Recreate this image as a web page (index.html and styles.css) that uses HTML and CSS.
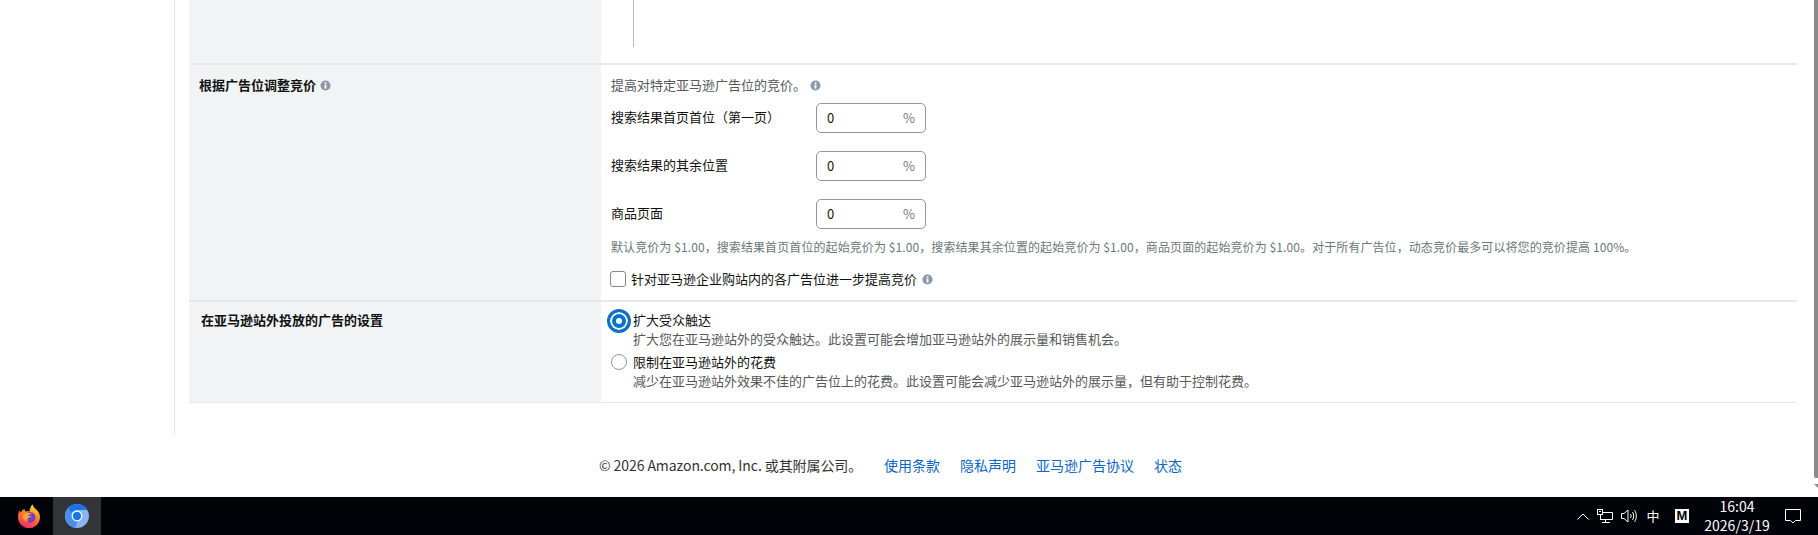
FILE: index.html
```html
<!DOCTYPE html>
<html lang="zh-CN">
<head>
<meta charset="utf-8">
<title>广告设置</title>
<link rel="stylesheet" href="styles.css">
</head>
<body>
<div class="viewport">
  <div class="page">
    <div class="shell">
      <aside class="sidebar"></aside>
      <main class="content">
        <section class="row row-top">
          <div class="row-label"></div>
          <div class="row-body"><div class="stem"></div></div>
        </section>
        <section class="row row-bids">
          <div class="row-label">
            <span class="label-strong">根据广告位调整竞价</span>
            <svg class="info" viewBox="0 0 12 12"><circle cx="6" cy="6" r="5.5" fill="#8c97a8"/><rect x="5" y="5" width="2" height="4.4" fill="#fff"/><rect x="5" y="2.6" width="2" height="1.6" fill="#fff"/></svg>
          </div>
          <div class="row-body bids-body">
            <div class="intro"><span>提高对特定亚马逊广告位的竞价。</span>
              <svg class="info" viewBox="0 0 12 12"><circle cx="6" cy="6" r="5.5" fill="#8c97a8"/><rect x="5" y="5" width="2" height="4.4" fill="#fff"/><rect x="5" y="2.6" width="2" height="1.6" fill="#fff"/></svg>
            </div>
            <div class="bid">
              <span class="bid-name">搜索结果首页首位（第一页）</span>
              <div class="bid-input"><span class="bid-value">0</span><span class="bid-unit">%</span></div>
            </div>
            <div class="bid">
              <span class="bid-name">搜索结果的其余位置</span>
              <div class="bid-input"><span class="bid-value">0</span><span class="bid-unit">%</span></div>
            </div>
            <div class="bid">
              <span class="bid-name">商品页面</span>
              <div class="bid-input"><span class="bid-value">0</span><span class="bid-unit">%</span></div>
            </div>
            <p class="hint">默认竞价为 $1.00，搜索结果首页首位的起始竞价为 $1.00，搜索结果其余位置的起始竞价为 $1.00，商品页面的起始竞价为 $1.00。对于所有广告位，动态竞价最多可以将您的竞价提高 100%。</p>
            <div class="check-line">
              <span class="checkbox"></span>
              <span>针对亚马逊企业购站内的各广告位进一步提高竞价</span>
              <svg class="info" viewBox="0 0 12 12"><circle cx="6" cy="6" r="5.5" fill="#8c97a8"/><rect x="5" y="5" width="2" height="4.4" fill="#fff"/><rect x="5" y="2.6" width="2" height="1.6" fill="#fff"/></svg>
            </div>
          </div>
        </section>
        <section class="row row-offsite">
          <div class="row-label"><span class="label-strong">在亚马逊站外投放的广告的设置</span></div>
          <div class="row-body offsite-body">
            <div class="option option-first">
              <span class="radio-slot"><span class="radio radio-on"></span></span>
              <div class="option-text">
                <div class="option-title">扩大受众触达</div>
                <div class="option-desc">扩大您在亚马逊站外的受众触达。此设置可能会增加亚马逊站外的展示量和销售机会。</div>
              </div>
            </div>
            <div class="option">
              <span class="radio-slot"><span class="radio"></span></span>
              <div class="option-text">
                <div class="option-title">限制在亚马逊站外的花费</div>
                <div class="option-desc">减少在亚马逊站外效果不佳的广告位上的花费。此设置可能会减少亚马逊站外的展示量，但有助于控制花费。</div>
              </div>
            </div>
          </div>
        </section>
      </main>
    </div>
    <footer class="footer">
      <span class="copyright">© 2026 Amazon.com, Inc. 或其附属公司。</span>
      <nav class="footer-links">
        <a href="#">使用条款</a>
        <a href="#">隐私声明</a>
        <a href="#">亚马逊广告协议</a>
        <a href="#">状态</a>
      </nav>
    </footer>
  </div>
  <div class="scrollbar">
    <div class="thumb"></div>
    <div class="arrow"></div>
  </div>
</div>
<div class="taskbar">
  <div class="task-left">
    <div class="task-btn">
      <svg class="app-icon" viewBox="2 1.200 20 21">
        <defs>
          <linearGradient id="ffg" x1="0.7" y1="0" x2="0.3" y2="1"><stop offset="0" stop-color="#ffe03a"/><stop offset="0.4" stop-color="#ff8a1f"/><stop offset="1" stop-color="#f5236e"/></linearGradient>
        </defs>
        <path d="M15 1.500c.6 2.600 2.400 3.600 4 5.200 1.600 1.600 2.600 3.600 2.600 6 0 5.300-4.300 9.600-9.600 9.600s-9.600-4.300-9.600-9.600c0-2.200.5-4.300 1.500-6 .2 1 .6 1.700 1.200 2.200C5.400 7 6.600 6 8.400 5.800c-.3.800-.1 1.400.4 1.800 1.500-.2 2.700-.1 3.500.3C12.800 5.500 13.500 3.300 15 1.500z" fill="url(#ffg)"/>
        <circle cx="12.800" cy="13" r="4.800" fill="#7a3bc4"/>
        <path d="M7 10.500c2-1.800 6-2 7.800-.2-1.800-.3-3.300.2-3.800 1.200 1.500-.2 2.800.4 3.300 1.500-1.300-.4-2.800-.1-3.400.8-.7 1-.3 2.200.7 3-2.800-.1-4.800-2-5-4.200 0-.8.100-1.500.4-2.100z" fill="#ffa52b"/>
      </svg>
    </div>
    <div class="task-btn task-active">
      <svg class="app-icon" viewBox="0 0 24 24">
        <circle cx="12" cy="12" r="12" fill="#8ab4f8"/>
        <path d="M12 0a12 12 0 0 1 10.400 6H12a6 6 0 0 0-5.600 3.800L3.200 4.200A12 12 0 0 1 12 0z" fill="#1a73e8"/>
        <path d="M3.200 4.200l5 8.800a4 4 0 0 0 5 3l-3 7.900A12 12 0 0 1 3.200 4.200z" fill="#4c8df0"/>
        <circle cx="12" cy="12" r="5.400" fill="#fff"/>
        <circle cx="12" cy="12" r="4.200" fill="#1a73e8"/>
      </svg>
    </div>
  </div>
  <div class="tray">
    <svg class="tray-chevron" viewBox="0 0 12 7"><path d="M.5 6.500 6 1l5.500 5.500" fill="none" stroke="#fff" stroke-width="1"/></svg>
    <svg class="tray-net" viewBox="0 0 16 14"><path d="M3.500 3.500h12v7h-12M8.500 10.500v2.500M5 13.500h8M3.500 6v5" fill="none" stroke="#fff"/><rect x=".5" y=".5" width="5" height="5" fill="#000" stroke="#fff"/><rect x="2" y="2" width="2" height="1" fill="#fff"/></svg>
    <svg class="tray-vol" viewBox="0 0 16 14"><path d="M.5 4.500h2.500L7 1v12L3 9.500H.5z M9.500 5c.8 1.200.8 2.800 0 4M11.500 3c1.600 2.400 1.600 5.600 0 8M13.500 1c2.400 3.600 2.400 8.400 0 12" fill="none" stroke="#fff"/></svg>
    <span class="tray-ime">中</span>
    <span class="tray-m">M</span>
    <div class="clock"><span>16:04</span><span>2026/3/19</span></div>
    <svg class="tray-note" viewBox="0 0 16 15"><path d="M.5.500h15v11h-5l-2.500 2.500-2.500-2.500h-5z" fill="none" stroke="#fff"/></svg>
  </div>
</div>
</body>
</html>
```
FILE: styles.css
```css
* { box-sizing: border-box; }
html, body { margin: 0; padding: 0; }
body {
  width: 1818px;
  height: 535px;
  overflow: hidden;
  background: #fff;
  color: #0f1111;
  font-family: "Noto Sans CJK SC", "Liberation Sans", sans-serif;
  font-size: 13px;
  line-height: 18px;
  display: flex;
  flex-direction: column;
}
.viewport { display: flex; height: 497px; }
.page { flex: 1; min-width: 0; display: flex; flex-direction: column; }
.shell { display: flex; height: 435px; }
.sidebar { width: 175px; border-right: 1px solid #e3e5e8; }
.content { flex: 1; padding: 0 17px 0 14px; }

.row { display: flex; border-bottom: 2px solid #e7e8ea; }
.row-label { width: 412px; background: #f2f3f5; padding: 11px 0 0 10px; display: flex; align-items: flex-start; gap: 4px; }
.row-body { flex: 1; padding-left: 10px; }
.row-top { height: 65px; }
.stem { width: 1px; height: 47px; margin-left: 22px; background: #b4bac4; }
.label-strong { font-weight: 700; }
.row-top .row-label { padding: 0; }

.info { width: 11px; height: 11px; flex: none; margin-top: 4px; }

.row-bids { height: 237px; }
.row-bids .row-body { display: flex; flex-direction: column; padding-top: 11px; }
.intro { display: flex; gap: 4px; color: #565959; height: 18px; }
.bid { display: flex; align-items: center; width: 315px; height: 30px; margin-bottom: 18px; }
.intro + .bid { margin-top: 9px; }
.bid-name { width: 205px; flex: none; margin-top: -3px; }
.bid-input { width: 110px; height: 30px; border: 1px solid #8d96a8; border-radius: 5px; padding: 0 10px; display: flex; justify-content: space-between; align-items: center; background: #fff; }
.bid-unit { color: #6f7a8c; }
.hint { margin: -9px 0 0; font-size: 12px; letter-spacing: .09px; color: #6c7778; height: 18px; white-space: nowrap; }
.check-line { display: flex; align-items: flex-start; margin-top: 14px; margin-left: -1px; }
.checkbox { width: 16px; height: 16px; border: 1px solid #7e8898; border-radius: 3px; margin: 1px 5px 0 0; flex: none; background: #fff; }
.check-line .info { margin: 4px 0 0 5px; }

.row-offsite { height: 101px; border-bottom-width: 1px; }
.row-offsite .row-label { padding-top: 9px; padding-left: 12px; }
.offsite-body { padding: 8px 0 0 0; }
.option { display: flex; margin-top: 3px; }
.option-first { margin-top: 0; }
.radio-slot { width: 32px; flex: none; display: flex; justify-content: center; height: 20px; padding-top: 2px; }
.option-first .radio-slot { margin-top: -1px; padding-top: 0; height: 24px; }
.radio { width: 16px; height: 16px; margin-left: 3px; border: 1px solid #8d96a8; border-radius: 50%; background: #fff; }
.radio-on { width: 24px; height: 24px; margin-left: 3px; border: 3px solid #0a73c9; background: #0a73c9; box-shadow: inset 0 0 0 2px #fff; position: relative; }
.radio-on::after { content: ""; position: absolute; left: 6px; top: 6px; width: 6px; height: 6px; border-radius: 50%; background: #fff; }
.option-text { margin-left: 0; }
.option-title { height: 19px; line-height: 20px; }
.option-desc { color: #565959; height: 20px; line-height: 20px; white-space: nowrap; }

.footer { height: 62px; display: flex; padding: 21px 0 0 599px; font-size: 14px; line-height: 18px; color: #333; }
.copyright { width: 285px; flex: none; white-space: nowrap; letter-spacing: -.08px; }
.footer-links { display: flex; gap: 20px; }
.footer-links a { color: #0b66c3; text-decoration: none; }

.scrollbar { width: 4px; flex: none; display: flex; flex-direction: column; align-items: flex-end; }
.thumb { width: 4px; height: 478px; background: #8b8b8b; border-radius: 0 0 0 2px; }
.arrow { width: 0; height: 0; margin-top: 6px; border-top: 4px solid #8b8b8b; border-left: 4px solid transparent; }

.taskbar { height: 38px; background: #000308; display: flex; justify-content: space-between; color: #fff; }
.task-left { display: flex; padding-left: 5px; }
.task-btn { width: 48px; height: 38px; display: flex; align-items: center; justify-content: center; }
.task-active { background: #333437; }
.app-icon { width: 24px; height: 24px; }
.tray { display: flex; align-items: center; padding-right: 17px; }
.tray-chevron { width: 12px; height: 7px; margin-right: 8px; }
.tray-net { width: 16px; height: 14px; margin-right: 8px; }
.tray-vol { width: 16px; height: 14px; margin-right: 8px; }
.tray-ime { font-size: 13px; width: 16px; text-align: center; margin-right: 14px; }
.tray-m { width: 14px; height: 14px; background: #fff; color: #000; font: 700 13px/14px "Liberation Sans", sans-serif; text-align: center; margin-right: 10px; }
.clock { width: 76px; display: flex; flex-direction: column; align-items: center; font-size: 14px; line-height: 19px; margin-right: 10px; }
.tray-note { width: 16px; height: 15px; }
```
